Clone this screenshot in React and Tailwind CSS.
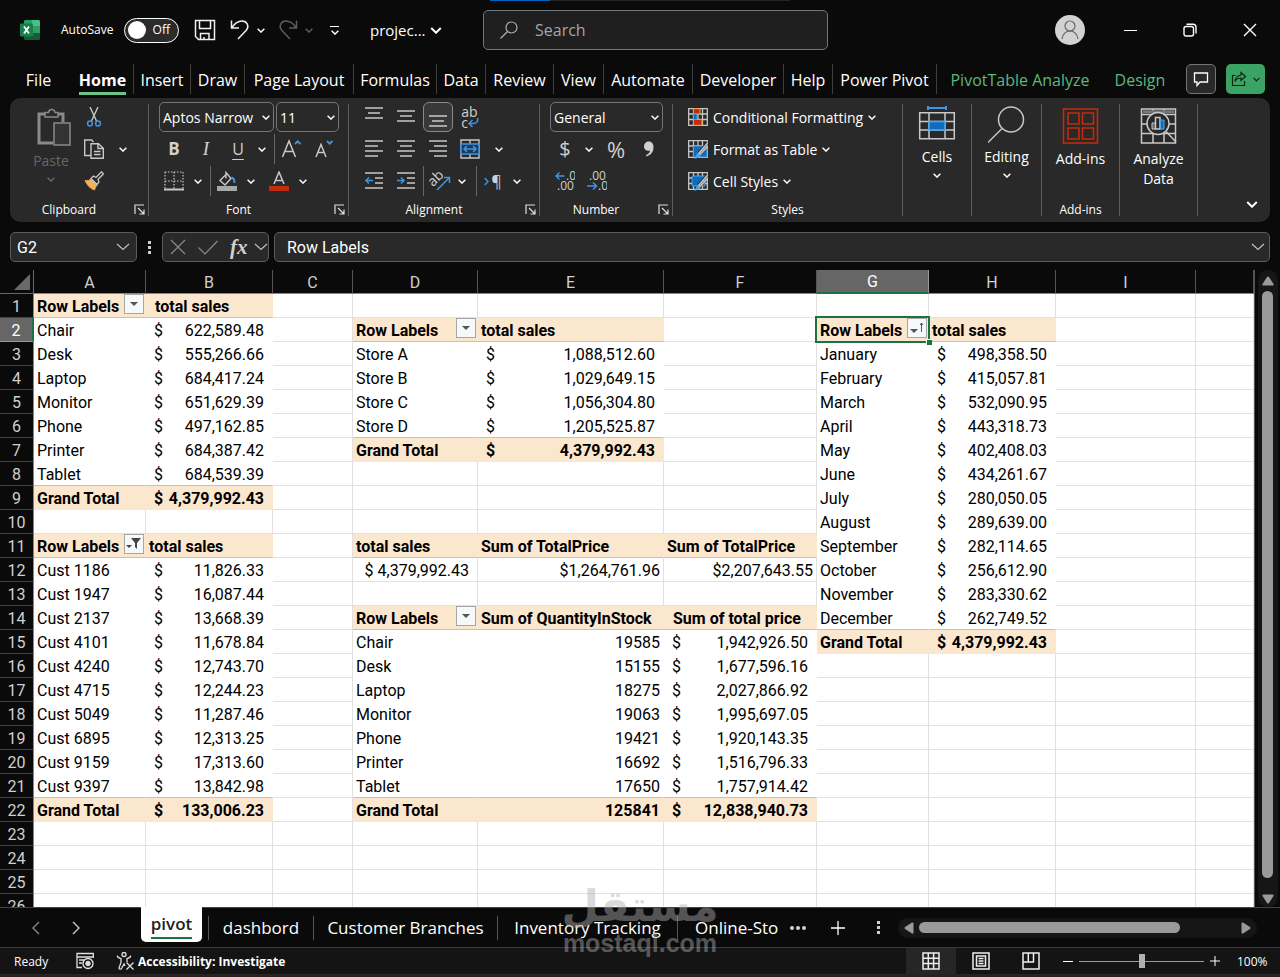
import { useState } from "react";
import { clsx } from "clsx";

const COLUMNS = [
    { id: "A", width: "w-[112px]" },
    { id: "B", width: "w-[127px]" },
    { id: "C", width: "w-[80px]" },
    { id: "D", width: "w-[125px]" },
    { id: "E", width: "w-[186px]" },
    { id: "F", width: "w-[153px]" },
    { id: "G", width: "w-[112px]" },
    { id: "H", width: "w-[127px]" },
    { id: "I", width: "w-[140px]" },
    { id: "", width: "" },
];

const PIVOTS = [
    {
        cols: ["A", "B"], row: 1, filter: "arrow",
        head: [{ text: "total sales", wide: true }],
        rows: [
            ["Chair", "622,589.48"], ["Desk", "555,266.66"], ["Laptop", "684,417.24"], ["Monitor", "651,629.39"],
            ["Phone", "497,162.85"], ["Printer", "684,387.42"], ["Tablet", "684,539.39"], ["Grand Total", "4,379,992.43"],
        ],
    },
    {
        cols: ["A", "B"], row: 11, filter: "funnel",
        head: [{ text: "total sales" }],
        rows: [
            ["Cust 1186", "11,826.33"], ["Cust 1947", "16,087.44"], ["Cust 2137", "13,668.39"], ["Cust 4101", "11,678.84"],
            ["Cust 4240", "12,743.70"], ["Cust 4715", "12,244.23"], ["Cust 5049", "11,287.46"], ["Cust 6895", "12,313.25"],
            ["Cust 9159", "17,313.60"], ["Cust 9397", "13,842.98"], ["Grand Total", "133,006.23"],
        ],
    },
    {
        cols: ["D", "E"], row: 2, filter: "arrow",
        head: [{ text: "total sales" }],
        rows: [
            ["Store A", "1,088,512.60"], ["Store B", "1,029,649.15"], ["Store C", "1,056,304.80"],
            ["Store D", "1,205,525.87"], ["Grand Total", "4,379,992.43"],
        ],
    },
    {
        cols: ["D", "E", "F"], row: 14, filter: "arrow", plain: "E",
        head: [{ text: "Sum of QuantityInStock" }, { text: "Sum of total price", wide: true }],
        rows: [
            ["Chair", "19585", "1,942,926.50"], ["Desk", "15155", "1,677,596.16"], ["Laptop", "18275", "2,027,866.92"],
            ["Monitor", "19063", "1,995,697.05"], ["Phone", "19421", "1,920,143.35"], ["Printer", "16692", "1,516,796.33"],
            ["Tablet", "17650", "1,757,914.42"], ["Grand Total", "125841", "12,838,940.73"],
        ],
    },
    {
        cols: ["G", "H"], row: 2, filter: "sorted",
        head: [{ text: "total sales" }],
        rows: [
            ["January", "498,358.50"], ["February", "415,057.81"], ["March", "532,090.95"], ["April", "443,318.73"],
            ["May", "402,408.03"], ["June", "434,261.67"], ["July", "280,050.05"], ["August", "289,639.00"],
            ["September", "282,114.65"], ["October", "256,612.90"], ["November", "283,330.62"], ["December", "262,749.52"],
            ["Grand Total", "4,379,992.43"],
        ],
    },
];

const buildCells = () => {
    const cells = {
        D11: { kind: "head", text: "total sales" },
        E11: { kind: "head", text: "Sum of TotalPrice" },
        F11: { kind: "head", text: "Sum of TotalPrice" },
        D12: { kind: "padded", text: "$ 4,379,992.43", grid: true },
        E12: { kind: "number", text: "$1,264,761.96", grid: true },
        F12: { kind: "number", text: "$2,207,643.55", grid: true },
    };
    PIVOTS.forEach((pivot) => {
        cells[pivot.cols[0] + pivot.row] = { kind: "filter", text: "Row Labels", filter: pivot.filter };
        pivot.head.forEach((h, i) => {
            cells[pivot.cols[i + 1] + pivot.row] = { kind: "head", ...h };
        });
        pivot.rows.forEach((values, r) => {
            const total = r === pivot.rows.length - 1;
            values.forEach((text, c) => {
                const col = pivot.cols[c];
                const kind = c === 0 ? "text" : col === pivot.plain ? "number" : "money";
                cells[col + (pivot.row + 1 + r)] = { kind, text, total, beforeTotal: r === pivot.rows.length - 2 };
            });
        });
    });
    return cells;
};

const CELLS = buildCells();

const Chevron = ({ className = "w-2 h-[5px]" }) => (
    <svg viewBox="0 0 8 5" className={clsx("shrink-0 fill-none stroke-current", className)} strokeWidth="1.4">
        <path d="M.6 .7 4 4.1 7.4 .7" />
    </svg>
);

const ThinChevron = () => (
    <svg width="14" height="8" viewBox="0 0 14 8" className="shrink-0 fill-none stroke-[#c0c0c0]" strokeWidth="1.2">
        <path d="M1 1l6 5.500L13 1" />
    </svg>
);

const Svg = ({ size = 20, className = "stroke-[#c8c8c8]", children }) => (
    <svg width={size} height={size} viewBox={`0 0 ${size} ${size}`} className={clsx("shrink-0 fill-none", className)}>
        {children}
    </svg>
);

const Tool = ({ label, active, children }) => (
    <button
        aria-label={label}
        className={clsx(
            "shrink-0 flex items-center justify-center text-[#d0d0d0]",
            active ? "size-[30px] m-px rounded-md border border-[#8a8a8a] bg-[#383838]" : "size-8"
        )}
    >
        {children}
    </button>
);

const Drop = ({ label, className }) => (
    <button aria-label={label} className={clsx("w-4 h-8 shrink-0 flex items-center justify-center text-white", className)}>
        <Chevron />
    </button>
);

const Rule = ({ className = "ml-1" }) => <span className={clsx("w-px h-[30px] shrink-0 bg-[#666]", className)} />;

const Select = ({ label, options, className }) => (
    <div className={clsx("grid items-center h-[30px] rounded-[5px] border border-[#757575] text-[14px] text-white", className)}>
        <select aria-label={label} className="col-start-1 row-start-1 w-full appearance-none bg-transparent pl-[3px] outline-none whitespace-nowrap">
            {options.map((option) => <option key={option}>{option}</option>)}
        </select>
        <span className="col-start-1 row-start-1 justify-self-end pr-[3px] pointer-events-none"><Chevron /></span>
    </div>
);

const Launcher = () => (
    <svg width="11" height="11" viewBox="0 0 11 11" className="fill-none stroke-[#e0e0e0]" strokeWidth="1.2">
        <path d="M1 10V1h9M4 4l6 6M10 5.5V10H5.5" />
    </svg>
);

const Group = ({ label, launcher, width, children }) => (
    <>
        <section className={clsx("shrink-0 flex flex-col pt-[3px]", width)}>
            <div className="h-24">{children}</div>
            <div className="h-[25px] flex items-center text-[12px] text-white">
                <span className="flex-1 text-center">{label}</span>
                {launcher && (
                    <button aria-label={`${label} settings`} className="w-5 flex justify-end pr-[3px]"><Launcher /></button>
                )}
            </div>
        </section>
        <span className="w-px my-1.5 shrink-0 bg-[#5c5c5c]" />
    </>
);

const TitleBar = () => {
    const [autoSave, setAutoSave] = useState(false);

    return (
        <header className="h-15 shrink-0 flex items-center pl-5 text-white">
            <svg width="20" height="20" viewBox="0 0 20 20">
                <rect x="4" width="16" height="20" rx="1.5" fill="#185c37" />
                <path d="M4 1.5A1.5 1.5 0 0 1 5.500 0H12v6H4z" fill="#21a366" />
                <path d="M12 0h6.500A1.5 1.5 0 0 1 20 1.500V6h-8z" fill="#45c184" />
                <path d="M12 6h8v7h-8z" fill="#2f9e63" />
                <rect y="3.500" width="13" height="13" rx="1.200" fill="#15804a" />
                <path d="M4 6.500l5 7M9 6.500l-5 7" stroke="#fff" strokeWidth="1.8" />
            </svg>
            <label className="ml-[21px] flex items-center">
                <span className="w-[63px] text-[12px]">AutoSave</span>
                <input type="checkbox" className="sr-only" checked={autoSave} onChange={(e) => setAutoSave(e.target.checked)} />
                <span className="w-[55px] h-[25px] flex items-center rounded-full border border-white bg-[#2b2b2b] pl-[3px] pr-2 justify-between text-[12px]">
                    <span className="size-[18px] rounded-full bg-white" />
                    {autoSave ? "On" : "Off"}
                </span>
            </label>
            <button aria-label="Save" className="ml-[15px]">
                <Svg size={22} className="stroke-[#f0f0f0]">
                    <path strokeWidth="1.5" d="M1.500 1.500h19v19H4.500l-3-3zM5.500 1.500v8h11v-8M6.500 20.500v-6h8.500v6M10 20.500V18" />
                </Svg>
            </button>
            <button aria-label="Undo" className="ml-[13px]">
                <Svg size={22} className="stroke-[#f0f0f0]">
                    <path strokeWidth="1.5" d="M2.500 1.500V9H10M3 8.500C6 4 9 2 13 2c5 0 7.500 5 4.500 9L9 20" />
                </Svg>
            </button>
            <Drop label="Undo history" className="ml-0.5" />
            <button aria-label="Redo" className="ml-2">
                <Svg size={22} className="stroke-[#5c5c5c]">
                    <path strokeWidth="1.5" d="M19.500 1.500V9H12M19 8.500C16 4 13 2 9 2 4 2 1.500 7 4.500 11L13 20" />
                </Svg>
            </button>
            <span className="ml-1.5 text-[#5c5c5c]"><Chevron /></span>
            <button aria-label="Customize toolbar" className="ml-[17px] flex flex-col items-center gap-[3px]">
                <span className="w-[9px] h-px bg-white" />
                <Chevron />
            </button>
            <button className="ml-[31px] flex items-center gap-1.5 text-[15px]">
                <span className="w-[54px] text-left">projec...</span>
                <Chevron className="w-3 h-[7px]" />
            </button>
            <div className="ml-[41px] w-[345px] h-10 flex items-center rounded-[5px] border border-[#757575] bg-[#1f1f1f]">
                <Svg size={18} className="ml-4 stroke-[#b0b0b0]">
                    <circle cx="11.500" cy="6.500" r="5.500" strokeWidth="1.200" />
                    <path strokeWidth="1.200" d="M7.500 10.500.500 17.500" />
                </Svg>
                <input aria-label="Search" className="ml-[17px] w-64 pb-px bg-transparent text-[16px] outline-none placeholder:text-[#a5a5a5]" placeholder="Search" />
            </div>
            <div className="ml-auto flex items-center">
                <button aria-label="Account" className="mr-[15px] size-[30px] rounded-full bg-[#d2d2d2] flex items-center justify-center">
                    <Svg size={20} className="stroke-[#666]">
                        <circle cx="10" cy="6" r="5" strokeWidth="1.200" />
                        <path strokeWidth="1.200" d="M2 19c.500-5 4-8 8-8s7.500 3 8 8" />
                    </Svg>
                </button>
                <button aria-label="Minimize" className="w-15 h-10 flex items-center justify-center">
                    <span className="w-[13px] h-px bg-white" />
                </button>
                <button aria-label="Restore" className="w-15 h-10 flex items-center justify-center">
                    <Svg size={14} className="stroke-white">
                        <rect x="1" y="3.500" width="9.500" height="9.500" rx="2" strokeWidth="1.400" />
                        <path strokeWidth="1.400" d="M3.500 1.200H10a3 3 0 0 1 3 3V10.500" />
                    </Svg>
                </button>
                <button aria-label="Close" className="w-15 h-10 flex items-center justify-center">
                    <Svg size={14} className="stroke-white"><path strokeWidth="1.400" d="M1 1l12 12M13 1 1 13" /></Svg>
                </button>
            </div>
        </header>
    );
};

const RIBBON_TABS = [
    { name: "File", width: "w-[57px]" },
    { name: "Home", width: "w-[62px]", active: true, rule: true },
    { name: "Insert", width: "w-[57px]", rule: true },
    { name: "Draw", width: "w-[54px]", rule: true },
    { name: "Page Layout", width: "w-[109px]", rule: true },
    { name: "Formulas", width: "w-[83px]", rule: true },
    { name: "Data", width: "w-[49px]", rule: true },
    { name: "Review", width: "w-[68px]", rule: true },
    { name: "View", width: "w-[50px]", rule: true },
    { name: "Automate", width: "w-[89px]", rule: true },
    { name: "Developer", width: "w-[91px]", rule: true },
    { name: "Help", width: "w-[49px]", rule: true },
    { name: "Power Pivot", width: "w-[104px]", rule: true },
    { name: "PivotTable Analyze", width: "w-[166px]", green: true },
    { name: "Design", width: "w-[74px]", green: true },
];

const RibbonTabs = () => (
    <nav className="h-[38px] shrink-0 flex items-start pt-1 pl-[10px] text-[16px]">
        {RIBBON_TABS.map((tab) => (
            <button
                key={tab.name}
                className={clsx(
                    "h-[30px] shrink-0 flex justify-center whitespace-nowrap leading-8",
                    tab.width,
                    tab.rule && "border-r border-[#3d3d3d]",
                    tab.green ? "text-[#5cb87f]" : "text-white",
                    tab.active && "ml-[5px] font-bold"
                )}
            >
                <span className={clsx(tab.active && "h-[31px] border-b-3 border-[#6cc48d]")}>{tab.name}</span>
            </button>
        ))}
        <div className="ml-auto flex gap-[10px] pr-[15px]">
            <button aria-label="Comments" className="size-[30px] rounded-[5px] border border-[#757575] bg-[#292929] flex items-center justify-center">
                <Svg size={16} className="stroke-white">
                    <path strokeWidth="1.300" d="M1.500 2h13v9H7l-3 3.500V11H1.500z" />
                </Svg>
            </button>
            <button aria-label="Share" className="w-[39px] h-[30px] rounded-[5px] bg-[#3ba464] flex items-center justify-center gap-1.5 text-[#0d2416]">
                <Svg size={16} className="stroke-[#0d2416]">
                    <path strokeWidth="1.200" d="M4.500 4.500h-3v10h12V10M10 1.500l4.500 4-4.500 4V7C7 7 5.500 8 4 10.500 4.500 6.500 6.500 4.500 10 4z" />
                </Svg>
                <Chevron className="w-[7px] h-[5px]" />
            </button>
        </div>
    </nav>
);

const Lines = ({ rows }) => (
    <Svg>
        {rows.map(([y, x1, x2]) => <path key={y} strokeWidth="1.5" d={`M${x1} ${y}H${x2}`} />)}
    </Svg>
);

const TableIcon = ({ children }) => (
    <Svg>
        <path strokeWidth="1.3" d="M.7 1.700h18.600v16.600H.7zM.7 7h18.600M.7 12.500h18.600M5.500 1.700v16.600M10 1.700v16.600M14.500 1.700v16.600" />
        {children}
    </Svg>
);

const Brush = () => (
    <>
        <path d="M6 19.500c2-1 1.500-4 4-5.500 2 0 3 2 2 3.500-1.200 1.500-3.500 2-6 2z" fill="#4ea6ea" stroke="none" />
        <path d="M19 2.500 9.500 13l2.500 3L20 7z" fill="#292929" stroke="none" />
        <path d="M19.500 4 10.800 14l1.400 1.400L20 7" fill="#888" strokeWidth="1.2" />
    </>
);

const StyleButton = ({ icon, children }) => (
    <button className="h-8 flex items-center text-white text-[14px] whitespace-nowrap">
        {icon}
        <span className="ml-[5px] mr-[5px]">{children}</span>
        <Chevron />
    </button>
);

const BigButton = ({ icon, drop, children }) => (
    <button className="w-full flex flex-col items-center pt-[5px] text-[14px] leading-5 text-white">
        {icon}
        <span className={clsx("text-center", drop ? "mt-[3px]" : "mt-[5px]")}>{children}</span>
        {drop && <span className="mt-1.5"><Chevron /></span>}
    </button>
);

const Ribbon = () => (
    <div className="mx-[10px] h-[124px] shrink-0 flex rounded-[10px] bg-[#292929] overflow-hidden">
        <Group label="Clipboard" launcher width="w-[138px]">
            <div className="flex">
                <button className="ml-[21px] w-10 flex flex-col items-center pt-[7px] text-[14px] leading-5 text-[#666]">
                    <svg width="36" height="40" viewBox="0 0 36 40" className="self-end fill-none stroke-[#8a8a8a]" strokeWidth="1.500">
                        <path strokeWidth="3" d="M11 6H4v29h14M22 6h6v8" />
                        <path fill="#292929" d="M10 9V4.500h3.500c.5-4 6-4 6.500 0H23V9z" />
                        <rect x="19" y="15" width="16" height="22" fill="#333" />
                    </svg>
                    <span className="mt-[3px]">Paste</span>
                    <span className="mt-1.5"><Chevron /></span>
                </button>
                <div className="ml-[7px]">
                    <Tool label="Cut">
                        <Svg>
                            <path strokeWidth="1.400" d="M6 0l6.500 14M14 0 7.500 14" />
                            <circle cx="6" cy="16.500" r="2.400" stroke="#3f95df" strokeWidth="1.500" />
                            <circle cx="14" cy="16.500" r="2.400" stroke="#3f95df" strokeWidth="1.500" />
                        </Svg>
                    </Tool>
                    <div className="flex">
                        <Tool label="Copy">
                            <Svg>
                                <path strokeWidth="1.400" d="M6.500 16.500H.7V1h7L9.500 3M7 4.700h7.500l4.800 4.500v10H7zM14 5v4.500h5M10 12.500h6.500M10 15.500h6.500" />
                            </Svg>
                        </Tool>
                        <Drop label="Copy options" className="ml-[5px]" />
                    </div>
                    <Tool label="Format painter">
                        <Svg>
                            <path fill="#f0b35a" stroke="#e9a544" d="M1 9.500c2.500.5 4 0 6-1.500l6 6.500c-1.500 1.500-2 3-2.500 4.500C6 17.500 3 14 1 9.500z" />
                            <path fill="#292929" strokeWidth="1.300" d="M7 7.500l2.500-2.500 2.500 1.500L17.500.8l2 2L14 8.500l1 2.500-2 2.500z" />
                        </Svg>
                    </Tool>
                </div>
            </div>
        </Group>

        <Group label="Font" launcher width="w-[199px]">
            <div className="h-8 pl-[10px] flex items-center gap-0.5">
                <Select label="Font" className="w-[115px]" options={["Aptos Narrow", "Arial"]} />
                <Select label="Font size" className="w-[63px]" options={["11", "12"]} />
            </div>
            <div className="pl-[9px] flex items-center">
                <Tool label="Bold"><b className="text-[17px]">B</b></Tool>
                <Tool label="Italic"><i className="font-['Liberation_Serif',serif] text-[19px]">I</i></Tool>
                <Tool label="Underline"><span className="text-[16px] underline underline-offset-4">U</span></Tool>
                <Drop label="Underline style" />
                <Rule />
                <Tool label="Increase font size">
                    <Svg>
                        <path strokeWidth="1.500" d="M1.500 18 8 2l6.500 16M4 12.500h8" />
                        <path stroke="#3f95df" strokeWidth="1.800" d="M14 5l2.700-2.700L19.500 5" />
                    </Svg>
                </Tool>
                <Tool label="Decrease font size">
                    <Svg>
                        <path strokeWidth="1.500" d="M3 18 8 5.500 13 18M5 13.500h6.500" />
                        <path stroke="#3f95df" strokeWidth="1.800" d="M14 2l2.700 2.700L19.500 2" />
                    </Svg>
                </Tool>
            </div>
            <div className="pl-[9px] flex items-center">
                <Tool label="Borders">
                    <Svg>
                        <path strokeWidth="1.200" strokeDasharray="1.500 1.500" d="M1 1h18M1 10h18M1 1v17M10 1v17M19 1v17" />
                        <path strokeWidth="2" d="M0 18.500h20" />
                    </Svg>
                </Tool>
                <Drop label="Border style" />
                <Rule />
                <Tool label="Fill color">
                    <Svg>
                        <path strokeWidth="1.400" d="M8.500 4 3 9.500l5 4.500 6-6.500L9 1.500v6" />
                        <path stroke="#3f95df" strokeWidth="2" d="M14.500 6.500c2 .5 3 2.500 3 5.500" />
                        <path stroke="#a8a8a8" strokeWidth="5" d="M0 17.500h20" />
                    </Svg>
                </Tool>
                <Drop label="Fill color palette" />
                <span className="w-1" />
                <Tool label="Font color">
                    <Svg>
                        <path strokeWidth="1.500" d="M5 13 10 1l5 12M6.500 9.500h7" />
                        <path stroke="#c42b0c" strokeWidth="5" d="M0 17.500h20" />
                    </Svg>
                </Tool>
                <Drop label="Font color palette" />
            </div>
        </Group>

        <Group label="Alignment" launcher width="w-[190px]">
            <div className="pl-[9px] flex items-center">
                <Tool label="Top align"><Lines rows={[[1, 1, 19], [6, 4, 16], [11, 1, 19]]} /></Tool>
                <Tool label="Middle align"><Lines rows={[[4, 1, 19], [9, 4, 16], [14, 1, 19]]} /></Tool>
                <Tool label="Bottom align" active><Lines rows={[[9, 1, 19], [14, 4, 16], [19, 1, 19]]} /></Tool>
                <Tool label="Wrap text">
                    <span className="flex flex-col text-[14px] leading-[11px] text-left">
                        <span>ab</span>
                        <span className="flex">c
                            <svg width="11" height="11" viewBox="0 0 11 11" className="fill-none stroke-[#3f95df]" strokeWidth="1.500">
                                <path d="M9.500 1c1 3-1 5.500-4 5.500H1M4.500 3 1 6.500 4.500 10" />
                            </svg>
                        </span>
                    </span>
                </Tool>
            </div>
            <div className="pl-[9px] flex items-center">
                <Tool label="Align left"><Lines rows={[[2, 1, 19], [7, 1, 14], [12, 1, 19], [17, 1, 14]]} /></Tool>
                <Tool label="Center"><Lines rows={[[2, 1, 19], [7, 4, 16], [12, 1, 19], [17, 4, 16]]} /></Tool>
                <Tool label="Align right"><Lines rows={[[2, 1, 19], [7, 6, 19], [12, 1, 19], [17, 6, 19]]} /></Tool>
                <Tool label="Merge and center">
                    <Svg>
                        <path strokeWidth="1.400" d="M1 1h18v18H1zM10 1v4M10 15v4" />
                        <rect x="1" y="5" width="18" height="10" stroke="#3f95df" strokeWidth="1.500" fill="#1d3a54" />
                        <path stroke="#3f95df" strokeWidth="1.500" d="M4 10h12M7 7l-3 3 3 3M13 7l3 3-3 3" />
                    </Svg>
                </Tool>
                <Drop label="Merge options" className="ml-[5px]" />
            </div>
            <div className="pl-[9px] flex items-center">
                <Tool label="Decrease indent">
                    <Svg>
                        <path strokeWidth="1.500" d="M1 2h18M11 7h8M11 12h8M1 17h18" />
                        <path stroke="#3f95df" strokeWidth="1.500" d="M9 9.500H2M5 6.500l-3 3 3 3" />
                    </Svg>
                </Tool>
                <Tool label="Increase indent">
                    <Svg>
                        <path strokeWidth="1.500" d="M1 2h18M11 7h8M11 12h8M1 17h18" />
                        <path stroke="#3f95df" strokeWidth="1.500" d="M1 9.500h7M5 6.500l3 3-3 3" />
                    </Svg>
                </Tool>
                <Rule className="ml-px" />
                <Tool label="Orientation">
                    <svg width="22" height="22" viewBox="0 0 22 22" className="fill-none">
                        <text x="0" y="14" fontSize="14" fill="#d0d0d0" transform="rotate(-45 6 11)">ab</text>
                        <path stroke="#3f95df" strokeWidth="1.500" d="M8 20 20 8M15 7.500h5.500V13" />
                    </svg>
                </Tool>
                <Drop label="Orientation options" className="-ml-0.5" />
                <Rule className="ml-1.5" />
                <Tool label="Text direction">
                    <span className="flex items-center gap-0.5 text-[16px] text-[#d0d0d0]">
                        <svg width="5" height="9" viewBox="0 0 5 9" className="fill-none stroke-[#3f95df]" strokeWidth="1.500"><path d="M.7 1 4 4.500.7 8" /></svg>
                        ¶
                    </span>
                </Tool>
                <Drop label="Text direction options" />
            </div>
        </Group>

        <Group label="Number" launcher width="w-[132px]">
            <div className="h-8 pl-[10px] flex items-center">
                <Select label="Number format" className="w-[113px]" options={["General", "Currency"]} />
            </div>
            <div className="pl-[9px] flex items-center">
                <Tool label="Accounting format"><span className="text-[20px]">$</span></Tool>
                <Drop label="Accounting options" />
                <span className="w-[3px]" />
                <Tool label="Percent"><span className="text-[22px]">%</span></Tool>
                <Tool label="Comma style">
                    <Svg>
                        <path fill="#d0d0d0" stroke="none" d="M10.500 2.500c3 0 5 2 5 5.500 0 5-2.500 8-7 9.500l-.5-1.500c2.500-1 3.800-2.500 4-4.500-3.500 1-6-1-6-4 0-3 2-5 4.500-5z" />
                    </Svg>
                </Tool>
            </div>
            <div className="pl-[9px] flex items-center">
                <Tool label="Increase decimal">
                    <Svg>
                        <text x="11" y="9" fontSize="12" fill="#d0d0d0" stroke="none">.0</text>
                        <text x="2" y="19" fontSize="12" fill="#d0d0d0" stroke="none">.00</text>
                        <path stroke="#3f95df" strokeWidth="1.500" d="M9.500 5H1M4.500 1.500 1 5l3.500 3.500" />
                    </Svg>
                </Tool>
                <Tool label="Decrease decimal">
                    <Svg>
                        <text x="2" y="9" fontSize="12" fill="#d0d0d0" stroke="none">.00</text>
                        <text x="11" y="19" fontSize="12" fill="#d0d0d0" stroke="none">.0</text>
                        <path stroke="#3f95df" strokeWidth="1.500" d="M0 15h9.500M6 11.500 9.500 15 6 18.500" />
                    </Svg>
                </Tool>
            </div>
        </Group>

        <Group label="Styles" width="w-[229px]">
            <div className="pl-[15px]">
                <StyleButton icon={
                    <TableIcon>
                        <path fill="#c42b0c" stroke="#f0a23c" d="M5.500 1.700H12V7H5.500zM5.500 12.500H14v5.800H5.500z" />
                        <path fill="#0f6cbd" stroke="#4ea6ea" d="M5.500 7h3.500v5.500H5.500z" />
                    </TableIcon>
                }>Conditional Formatting</StyleButton>
                <StyleButton icon={
                    <TableIcon>
                        <path fill="#0f6cbd" stroke="#4ea6ea" d="M5.500 7h13.500v11H5.500z" />
                        <Brush />
                    </TableIcon>
                }>Format as Table</StyleButton>
                <StyleButton icon={
                    <TableIcon>
                        <path fill="#0f6cbd" stroke="#4ea6ea" d="M4 5h13v10H4z" />
                        <Brush />
                    </TableIcon>
                }>Cell Styles</StyleButton>
            </div>
        </Group>

        <Group label="" width="w-[68px]">
            <BigButton drop icon={
                <Svg size={38}>
                    <path stroke="#3f95df" strokeWidth="2" d="M10 2h18M10 0v4M28 0v4" />
                    <path strokeWidth="1.500" d="M1.700 6.700h34.600v26H1.700zM1.700 15.500h34.600M1.700 24h34.600M11 6.700v26M27 6.700v26" />
                    <path fill="#0f6cbd" stroke="#4ea6ea" strokeWidth="1.500" d="M11 15.500h16V24H11z" />
                </Svg>
            }>Cells</BigButton>
        </Group>
        <Group label="" width="w-[69px]">
            <BigButton drop icon={
                <Svg size={38}>
                    <circle cx="23" cy="13.500" r="12.500" strokeWidth="1.500" />
                    <path strokeWidth="1.500" d="M14 22.500 0 36.500" />
                </Svg>
            }>Editing</BigButton>
        </Group>
        <Group label="Add-ins" width="w-[77px]">
            <BigButton icon={
                <Svg size={38} className="stroke-[#c42b0c]">
                    <path strokeWidth="1.600" d="M1.500 3h34v34h-34zM6 7h11v11H6zM20.500 7h11v11h-11zM6 22h11v11H6zM20.500 22h11v11h-11z" />
                </Svg>
            }>Add-ins</BigButton>
        </Group>
        <Group label="" width="w-[77px]">
            <BigButton icon={
                <Svg size={38}>
                    <path strokeWidth="1.500" d="M1.500 3h34v34h-34zM1.500 8.500h34M1.500 18h6M29 18h6.500M1.500 27.500h34M13 27.500V37M24 27.500V37M13 3v5.500M24 3v5.500" />
                    <path stroke="#777" strokeWidth="3" d="M3 5.700h31" />
                    <circle cx="18" cy="17.500" r="11" fill="#292929" strokeWidth="1.500" />
                    <path strokeWidth="1.500" d="M26 25.500 36 36" />
                    <path fill="#666" d="M12 17h3.500v6H12z" />
                    <path strokeWidth="1.500" d="M15.500 11.500H20V23h-4.500z" />
                    <path fill="#0f6cbd" stroke="#4ea6ea" d="M20.500 14H24v9h-3.500z" />
                </Svg>
            }>Analyze Data</BigButton>
        </Group>
        <div className="flex-1 flex items-end justify-end pr-3 pb-3.5 text-white">
            <button aria-label="Collapse ribbon"><Chevron className="w-3 h-[7px]" /></button>
        </div>
    </div>
);

const FormulaBar = () => (
    <div className="mx-[10px] mt-[10px] mb-2 h-[30px] shrink-0 flex font-[Roboto,sans-serif] text-[16px] text-white">
        <div className="w-[127px] shrink-0 flex items-center rounded-[5px] border border-[#5c5c5c] bg-[#292929] px-1.5">
            <input aria-label="Name box" className="w-full min-w-0 pt-0.5 bg-transparent outline-none" defaultValue="G2" />
            <ThinChevron />
        </div>
        <span className="w-[25px] shrink-0 flex flex-col items-center justify-center gap-0.5">
            <span className="size-[3px] bg-[#d0d0d0]" /><span className="size-[3px] bg-[#d0d0d0]" /><span className="size-[3px] bg-[#d0d0d0]" />
        </span>
        <div className="w-[107px] shrink-0 flex items-center rounded-[5px] border border-[#5c5c5c] bg-[#292929] pl-[7px]">
            <button aria-label="Cancel"><Svg size={16} className="stroke-[#8a8a8a]"><path strokeWidth="1.200" d="M1 1l14 14M15 1 1 15" /></Svg></button>
            <button aria-label="Enter" className="ml-3"><Svg size={20} className="stroke-[#8a8a8a]"><path strokeWidth="1.200" d="M.5 10.500 7 17 19.500 4" /></Svg></button>
            <button aria-label="Insert function" className="ml-3 w-6 text-left font-['Liberation_Serif',serif] italic font-bold text-[21px] leading-none text-[#d0d0d0]">fx</button>
            <ThinChevron />
        </div>
        <div className="ml-[5px] flex-1 flex items-center rounded-[5px] border border-[#5c5c5c] bg-[#292929] pl-3 pr-1">
            <input aria-label="Formula" className="flex-1 min-w-0 pt-0.5 bg-transparent outline-none" defaultValue="Row Labels" />
            <ThinChevron />
        </div>
    </div>
);

const FilterButton = ({ type }) => (
    <button aria-label="Filter" className="size-5 shrink-0 border border-[#a6a6a6] bg-[#f7f8fa] flex items-center justify-center">
        {type === "arrow" && <svg width="8" height="4" viewBox="0 0 8 4"><path d="M0 0h8L4 4z" fill="#555" /></svg>}
        {type === "funnel" && (
            <svg width="16" height="12" viewBox="0 0 16 12">
                <path d="M5 0h10l-4 5v6l-2-2V5z" fill="#444" /><path d="M0 7h6L3 10z" fill="#444" />
            </svg>
        )}
        {type === "sorted" && (
            <svg width="14" height="14" viewBox="0 0 14 14">
                <path d="M0 8h8L4 12z" fill="#555" /><path d="M11.500 11V2M10 4l1.500-2L13 4" fill="none" stroke="#555" />
            </svg>
        )}
    </button>
);

const CellContent = ({ cell }) => {
    if (cell.kind === "filter") {
        return (
            <div className="flex items-start justify-between pl-[3px] pr-px">
                <span className="pt-0.5">{cell.text}</span>
                <FilterButton type={cell.filter} />
            </div>
        );
    }
    if (cell.kind === "money") {
        return <div className="flex justify-between px-2 pt-0.5"><span>$</span><span>{cell.text}</span></div>;
    }
    if (cell.kind === "padded") return <div className="pr-2 pt-0.5 text-right">{cell.text}</div>;
    if (cell.kind === "number") return <div className="pr-[3px] pt-0.5 text-right">{cell.text}</div>;
    return <div className={clsx("pt-0.5", cell.wide ? "pl-[9px]" : "pl-[3px]")}>{cell.text}</div>;
};

const Cell = ({ id }) => {
    const cell = CELLS[id];
    if (!cell) return <td className="h-6 p-0 border-r border-b border-[#e1e1e1]" />;

    const header = cell.kind === "filter" || cell.kind === "head";
    return (
        <td
            className={clsx(
                "h-6 p-0 border-r border-b leading-[21px] whitespace-nowrap",
                id === "G2" && "relative z-10",
                header && "bg-[#fbe6ce] border-r-[#fbe6ce] border-b-[#f2b877] font-bold",
                cell.total && "bg-[#fbe6ce] border-[#fbe6ce] font-bold",
                cell.beforeTotal && "border-r-white border-b-[#f2b877]",
                cell.grid && "border-[#e1e1e1]",
                !header && !cell.total && !cell.beforeTotal && !cell.grid && "border-white"
            )}
        >
            <CellContent cell={cell} />
            {id === "G2" && (
                <span className="absolute -inset-0.5 border-2 border-[#1d7245] pointer-events-none">
                    <span className="absolute -right-1 -bottom-1 size-1.5 bg-[#1d7245] border-t border-l border-white" />
                </span>
            )}
        </td>
    );
};

const Sheet = () => (
    <main className="flex-1 min-h-0 flex">
        <div className="flex-1 min-w-0 overflow-hidden bg-white">
            <table className="w-full table-fixed border-separate border-spacing-0 font-[Roboto,sans-serif] text-[16px] text-black">
                <colgroup>
                    <col className="w-[34px]" />
                    {COLUMNS.map((col) => <col key={col.id} className={col.width} />)}
                </colgroup>
                <thead>
                    <tr>
                        <th className="h-6 p-0 bg-[#0a0a0a] border-r border-b border-[#666]">
                            <svg width="16" height="16" viewBox="0 0 16 16" className="ml-auto mr-[3px]"><path d="M16 0v16H0z" fill="#6a6a6a" /></svg>
                        </th>
                        {COLUMNS.map((col) => (
                            <th
                                key={col.id}
                                className={clsx(
                                    "h-6 p-0 leading-[22px] font-normal border-r",
                                    col.id === "G" ? "bg-[#666] text-white border-[#999] border-b-2 border-b-[#1d7245]" : "bg-[#0a0a0a] text-[#d0d0d0] border-[#555] border-b border-b-[#888]"
                                )}
                            >
                                <div className="pt-0.5 leading-5">{col.id}</div>
                            </th>
                        ))}
                    </tr>
                </thead>
                <tbody>
                    {Array.from({ length: 26 }, (_, i) => i + 1).map((row) => (
                        <tr key={row}>
                            <th
                                className={clsx(
                                    "h-6 p-0 leading-[21px] font-normal border-b",
                                    row === 2 ? "bg-[#666] text-white border-[#999] border-r-2 border-r-[#1d7245]" : "bg-[#0a0a0a] text-[#d0d0d0] border-[#444] border-r border-r-[#888]"
                                )}
                            >
                                <div className="pt-0.5">{row}</div>
                            </th>
                            {COLUMNS.map((col) => <Cell key={col.id} id={col.id + row} />)}
                        </tr>
                    ))}
                </tbody>
            </table>
        </div>
        <div className="w-[26px] shrink-0 flex justify-center bg-[#0a0a0a] border-l border-[#555]">
            <div className="w-5 flex flex-col items-center justify-between rounded-[10px] bg-[#161616] pt-1.5 pb-[3px]">
                <svg width="12" height="10" viewBox="0 0 12 10"><path d="M5 1 .5 8Q0 9.500 1.500 9.500h9Q12 9.500 11.500 8L7 1Q6 0 5 1z" fill="#9a9a9a" /></svg>
                <div className="mt-[5px] mb-4 flex-1 w-[11px] rounded-full bg-[#9a9a9a]" />
                <svg width="12" height="10" viewBox="0 0 12 10"><path d="M5 9 .5 2Q0 .5 1.500 .5h9Q12 .5 11.500 2L7 9Q6 10 5 9z" fill="#9a9a9a" /></svg>
            </div>
        </div>
    </main>
);

const SHEETS = [
    { name: "dashbord", width: "w-[105px]" },
    { name: "Customer Branches", width: "w-[184px]" },
    { name: "Inventory Tracking", width: "w-[180px]" },
];

const SheetTabs = () => (
    <nav className="relative h-10 shrink-0 flex items-center border-t border-[#444] text-[17px] text-white">
        <button aria-label="Previous sheet" className="ml-[29px]"><Svg size={14} className="stroke-[#888]"><path strokeWidth="1.400" d="M10 1 4 7l6 6" /></Svg></button>
        <button aria-label="Next sheet" className="ml-[26px]"><Svg size={14}><path strokeWidth="1.400" d="M4 1l6 6-6 6" /></Svg></button>
        <button className="ml-[58px] -mt-px w-[61px] h-[35px] self-start flex items-start justify-center rounded-b-[5px] bg-white font-semibold text-[#222]">
            <span className="h-8 leading-[34px] border-b-2 border-[#1d7245]">pivot</span>
        </button>
        <span className="ml-1.5 w-px h-6 bg-[#555]" />
        {SHEETS.map((sheet) => (
            <button key={sheet.name} className={clsx("h-6 leading-6 shrink-0 whitespace-nowrap border-r border-[#555]", sheet.width)}>{sheet.name}</button>
        ))}
        <button className="ml-[17px] w-[84px] text-left">Online-Sto</button>
        <button aria-label="More sheets" className="ml-[7px] w-6 flex justify-center gap-0.5">
            <span className="size-1 rounded-full bg-[#d0d0d0]" /><span className="size-1 rounded-full bg-[#d0d0d0]" /><span className="size-1 rounded-full bg-[#d0d0d0]" />
        </button>
        <button aria-label="Add sheet" className="ml-5"><Svg size={16} className="stroke-white"><path strokeWidth="1.300" d="M8 1v14M1 8h14" /></Svg></button>
        <span className="ml-[31px] flex flex-col gap-0.5">
            <span className="size-[3px] bg-[#d0d0d0]" /><span className="size-[3px] bg-[#d0d0d0]" /><span className="size-[3px] bg-[#d0d0d0]" />
        </span>
        <div className="ml-[18px] mr-[23px] flex-1 h-5 flex items-center rounded-full bg-[#161616] px-1.5">
            <svg width="10" height="12" viewBox="0 0 10 12"><path d="M1 5 8 .5Q9.500 0 9.500 1.500v9Q9.500 12 8 11.500L1 7Q0 6 1 5z" fill="#9a9a9a" /></svg>
            <div className="ml-[5px] mr-[61px] flex-1 h-[11px] rounded-full bg-[#9a9a9a]" />
            <svg width="10" height="12" viewBox="0 0 10 12"><path d="M9 5 2 .5Q.5 0 .5 1.500v9Q.5 12 2 11.500L9 7Q10 6 9 5z" fill="#9a9a9a" /></svg>
        </div>
        {/* watermark over the sheet and its tabs */}
        <div className="absolute left-[562px] -top-8 w-[156px] pt-2 flex flex-col items-center text-[#aeaeae] opacity-45 font-bold pointer-events-none">
            <span lang="ar" dir="rtl" className="font-['DejaVu_Sans',sans-serif] text-[43px] leading-[45px]">مستقل</span>
            <span className="font-['Liberation_Sans',sans-serif] text-[25px] leading-7">mostaql.com</span>
        </div>
    </nav>
);

const StatusBar = () => {
    const [zoom, setZoom] = useState(50);

    return (
        <footer className="h-[30px] shrink-0 flex items-center border-t border-[#3a3a3a] border-b-3 border-b-[#242424] bg-[#141414] text-[12px] text-white">
            <span className="ml-3.5 w-[62px] pt-0.5">Ready</span>
            <button aria-label="Record macro">
                <Svg size={18} className="stroke-[#e0e0e0]">
                    <path strokeWidth="1.300" d="M6 15.500H1V1.500h16.300V6M1 5h16.300M3 8h5M3 11h3" />
                    <circle cx="12" cy="11.500" r="5" strokeWidth="1.400" />
                    <circle cx="12" cy="11.500" r="2.300" fill="#e0e0e0" />
                </Svg>
            </button>
            <button className="ml-[22px] flex items-center gap-1 font-bold">
                <Svg size={18} className="stroke-[#e0e0e0]">
                    <circle cx="8" cy="2.500" r="2" strokeWidth="1.300" />
                    <path strokeWidth="1.300" d="M1.500 3.500C1 5 2 5.500 5 6.500v4L3 16c0 1.500 2 1.500 2.500.5L8 12l1 2M14.500 3.500c.5 1.500-.5 2-3.500 3V10M10.500 10.500l7 7M17.500 10.500l-7 7" />
                </Svg>
                <span className="pt-0.5">Accessibility: Investigate</span>
            </button>
            <div className="ml-auto flex items-center">
                <button aria-label="Normal view" className="w-[50px] h-[26px] flex items-center justify-center bg-[#262626]">
                    <Svg size={18} className="stroke-[#eee]"><path strokeWidth="1.500" d="M1 1h16v16H1zM1 6.300h16M1 11.600h16M6.300 1v16M11.600 1v16" /></Svg>
                </button>
                <button aria-label="Page layout view" className="w-[50px] flex justify-center">
                    <Svg size={18} className="stroke-[#eee]"><path strokeWidth="1.500" d="M1 1h16v16H1zM4.500 4h9v10h-9zM6.500 6.500h5M6.500 9h5M6.500 11.500h5" /></Svg>
                </button>
                <button aria-label="Page break view" className="w-[50px] flex justify-center">
                    <Svg size={18} className="stroke-[#eee]"><path strokeWidth="1.500" d="M1 1h16v16H1zM1 10h10.500V1M6.300 1v9" /></Svg>
                </button>
                <button aria-label="Zoom out" className="ml-[7px] w-[10px] h-4 flex items-center"><span className="w-[10px] h-px bg-white" /></button>
                <input
                    aria-label="Zoom"
                    type="range"
                    value={zoom}
                    onChange={(e) => setZoom(e.target.value)}
                    className="ml-1.5 w-[125px] h-4 appearance-none bg-transparent bg-[linear-gradient(#9a9a9a,#9a9a9a)] bg-[length:100%_1px] bg-center bg-no-repeat [&::-webkit-slider-thumb]:appearance-none [&::-webkit-slider-thumb]:w-1.5 [&::-webkit-slider-thumb]:h-3.5 [&::-webkit-slider-thumb]:bg-[#b0b0b0]"
                />
                <button aria-label="Zoom in" className="ml-1.5"><Svg size={10} className="stroke-white"><path d="M5 0v10M0 5h10" /></Svg></button>
                <span className="ml-[17px] w-[43px] pt-0.5">100%</span>
            </div>
        </footer>
    );
};

const App = () => (
    <div className="relative h-screen flex flex-col overflow-hidden bg-[#0a0a0a] font-['Open_Sans',sans-serif]">
        <div className="absolute top-0 inset-x-0 flex justify-center">
            <span className="w-15 h-px bg-[#0067c0]" />
            <span className="w-60 h-px bg-[#242424]" />
        </div>
        <TitleBar />
        <RibbonTabs />
        <Ribbon />
        <FormulaBar />
        <Sheet />
        <SheetTabs />
        <StatusBar />
    </div>
);

export default App;
